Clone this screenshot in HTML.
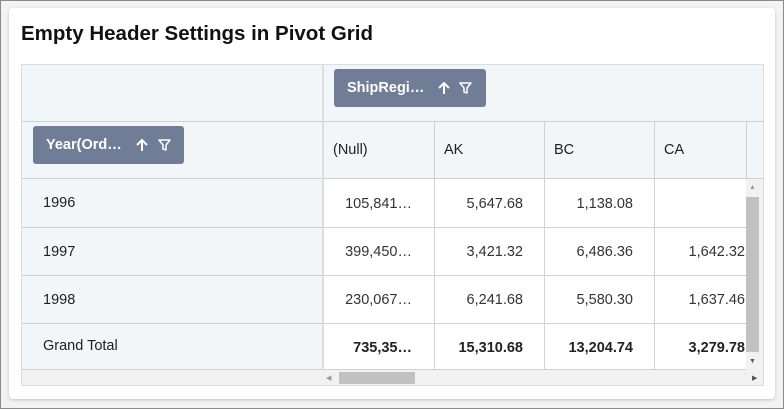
<!DOCTYPE html><html><head><style>
*{margin:0;padding:0;box-sizing:border-box}
html,body{width:784px;height:409px;overflow:hidden}
body{background:#f2f2f2;position:relative;font-family:"Liberation Sans",Roboto,sans-serif;color:#212121}
.frame{position:absolute;left:0;top:0;width:784px;height:409px;border:1px solid #8a8a8a}
.card{position:absolute;left:9px;top:8px;width:766px;height:391px;background:#fff;border-radius:4px;box-shadow:0 1px 3px rgba(0,0,0,.2)}
h1{position:absolute;left:21px;top:22px;font-size:20.5px;font-weight:bold;color:#111}
.a{position:absolute}
.grid{position:absolute;left:21px;top:64px;width:743px;height:322px;border:1px solid #ddd;overflow:hidden;background:#fff}
.hl{position:absolute;background:#d0d0d0;height:1px}
.vl{position:absolute;background:#d0d0d0;width:1px}
.pill{position:absolute;background:#6f7d96;border-radius:3px;color:#fff;font-size:14.5px;font-weight:bold;padding-left:13px;line-height:39px}
.pill svg{position:absolute;top:12px}
.t{position:absolute;font-size:14.5px}
.n{position:absolute;font-size:14.5px;text-align:right;color:#333}
.b{font-weight:bold;color:#222}
</style></head><body>
<div class="frame"></div>
<div class="card"></div>
<h1>Empty Header Settings in Pivot Grid</h1>
<div class="grid">
<div class="a" style="left:0;top:0;width:743px;height:114px;background:#f3f6f9"></div>
<div class="a" style="left:0;top:114px;width:301px;height:191px;background:#f3f6f9"></div>
<div class="hl" style="left:0;top:56px;width:743px"></div>
<div class="hl" style="left:0;top:113px;width:743px"></div>
<div class="hl" style="left:0;top:162px;width:724px"></div>
<div class="hl" style="left:0;top:210px;width:724px"></div>
<div class="hl" style="left:0;top:258px;width:724px"></div>
<div class="hl" style="left:0;top:304px;width:743px"></div>
<div class="vl" style="left:300px;top:0;height:305px;width:2px;background:#ddd"></div>
<div class="vl" style="left:412px;top:57px;height:248px"></div>
<div class="vl" style="left:522px;top:57px;height:248px"></div>
<div class="vl" style="left:632px;top:57px;height:248px"></div>
<div class="vl" style="left:724px;top:57px;height:57px"></div>
<div class="pill" style="left:312px;top:4px;width:152px;height:38px">ShipRegi…
<svg style="left:103px" width="14" height="14" viewBox="0 0 14 14"><path d="M7 13V2M2 7l5-5 5 5" stroke="#fff" stroke-width="2" fill="none"/></svg>
<svg style="left:125px" width="13" height="14" viewBox="0 0 13 14"><path d="M1 2h11L8 7v5L5 11V7z" stroke="#fff" stroke-width="1.5" fill="none" stroke-linejoin="round"/></svg></div>
<div class="pill" style="left:11px;top:61px;width:151px;height:38px">Year(Ord…
<svg style="left:102px" width="14" height="14" viewBox="0 0 14 14"><path d="M7 13V2M2 7l5-5 5 5" stroke="#fff" stroke-width="2" fill="none"/></svg>
<svg style="left:125px" width="13" height="14" viewBox="0 0 13 14"><path d="M1 2h11L8 7v5L5 11V7z" stroke="#fff" stroke-width="1.5" fill="none" stroke-linejoin="round"/></svg></div>
<div class="t" style="left:311px;top:77px">(Null)</div>
<div class="t" style="left:422px;top:77px">AK</div>
<div class="t" style="left:532px;top:77px">BC</div>
<div class="t" style="left:642px;top:77px">CA</div>
<div class="t" style="left:21px;top:130px">1996</div>
<div class="t" style="left:21px;top:179px">1997</div>
<div class="t" style="left:21px;top:227px">1998</div>
<div class="t" style="left:21px;top:273px">Grand Total</div>
<div class="n" style="left:300px;width:90px;top:131px">105,841…</div><div class="n" style="left:411px;width:90px;top:131px">5,647.68</div><div class="n" style="left:521px;width:90px;top:131px">1,138.08</div>
<div class="n" style="left:300px;width:90px;top:179px">399,450…</div><div class="n" style="left:411px;width:90px;top:179px">3,421.32</div><div class="n" style="left:521px;width:90px;top:179px">6,486.36</div><div class="n" style="left:632px;width:91px;top:179px">1,642.32</div>
<div class="n" style="left:300px;width:90px;top:227px">230,067…</div><div class="n" style="left:411px;width:90px;top:227px">6,241.68</div><div class="n" style="left:521px;width:90px;top:227px">5,580.30</div><div class="n" style="left:632px;width:91px;top:227px">1,637.46</div>
<div class="n b" style="left:300px;width:90px;top:275px">735,35…</div><div class="n b" style="left:411px;width:90px;top:275px">15,310.68</div><div class="n b" style="left:521px;width:90px;top:275px">13,204.74</div><div class="n b" style="left:632px;width:91px;top:275px">3,279.78</div>
<div class="a" style="left:724px;top:114px;width:18px;height:191px;background:#f1f1f1"></div>
<div class="a" style="left:724px;top:132px;width:13px;height:155px;background:#c1c1c1"></div>
<div class="a" style="left:727px;top:119px;font-size:7px;color:#999">▲</div>
<div class="a" style="left:727px;top:293px;font-size:7px;color:#555">▼</div>
<div class="a" style="left:0;top:305px;width:743px;height:17px;background:#f1f1f1"></div>
<div class="a" style="left:317px;top:307px;width:76px;height:12px;background:#c1c1c1"></div>
<div class="a" style="left:304px;top:309px;font-size:7px;color:#999">◀</div>
<div class="a" style="left:730px;top:309px;font-size:7px;color:#555">▶</div>
</div>
</body></html>
